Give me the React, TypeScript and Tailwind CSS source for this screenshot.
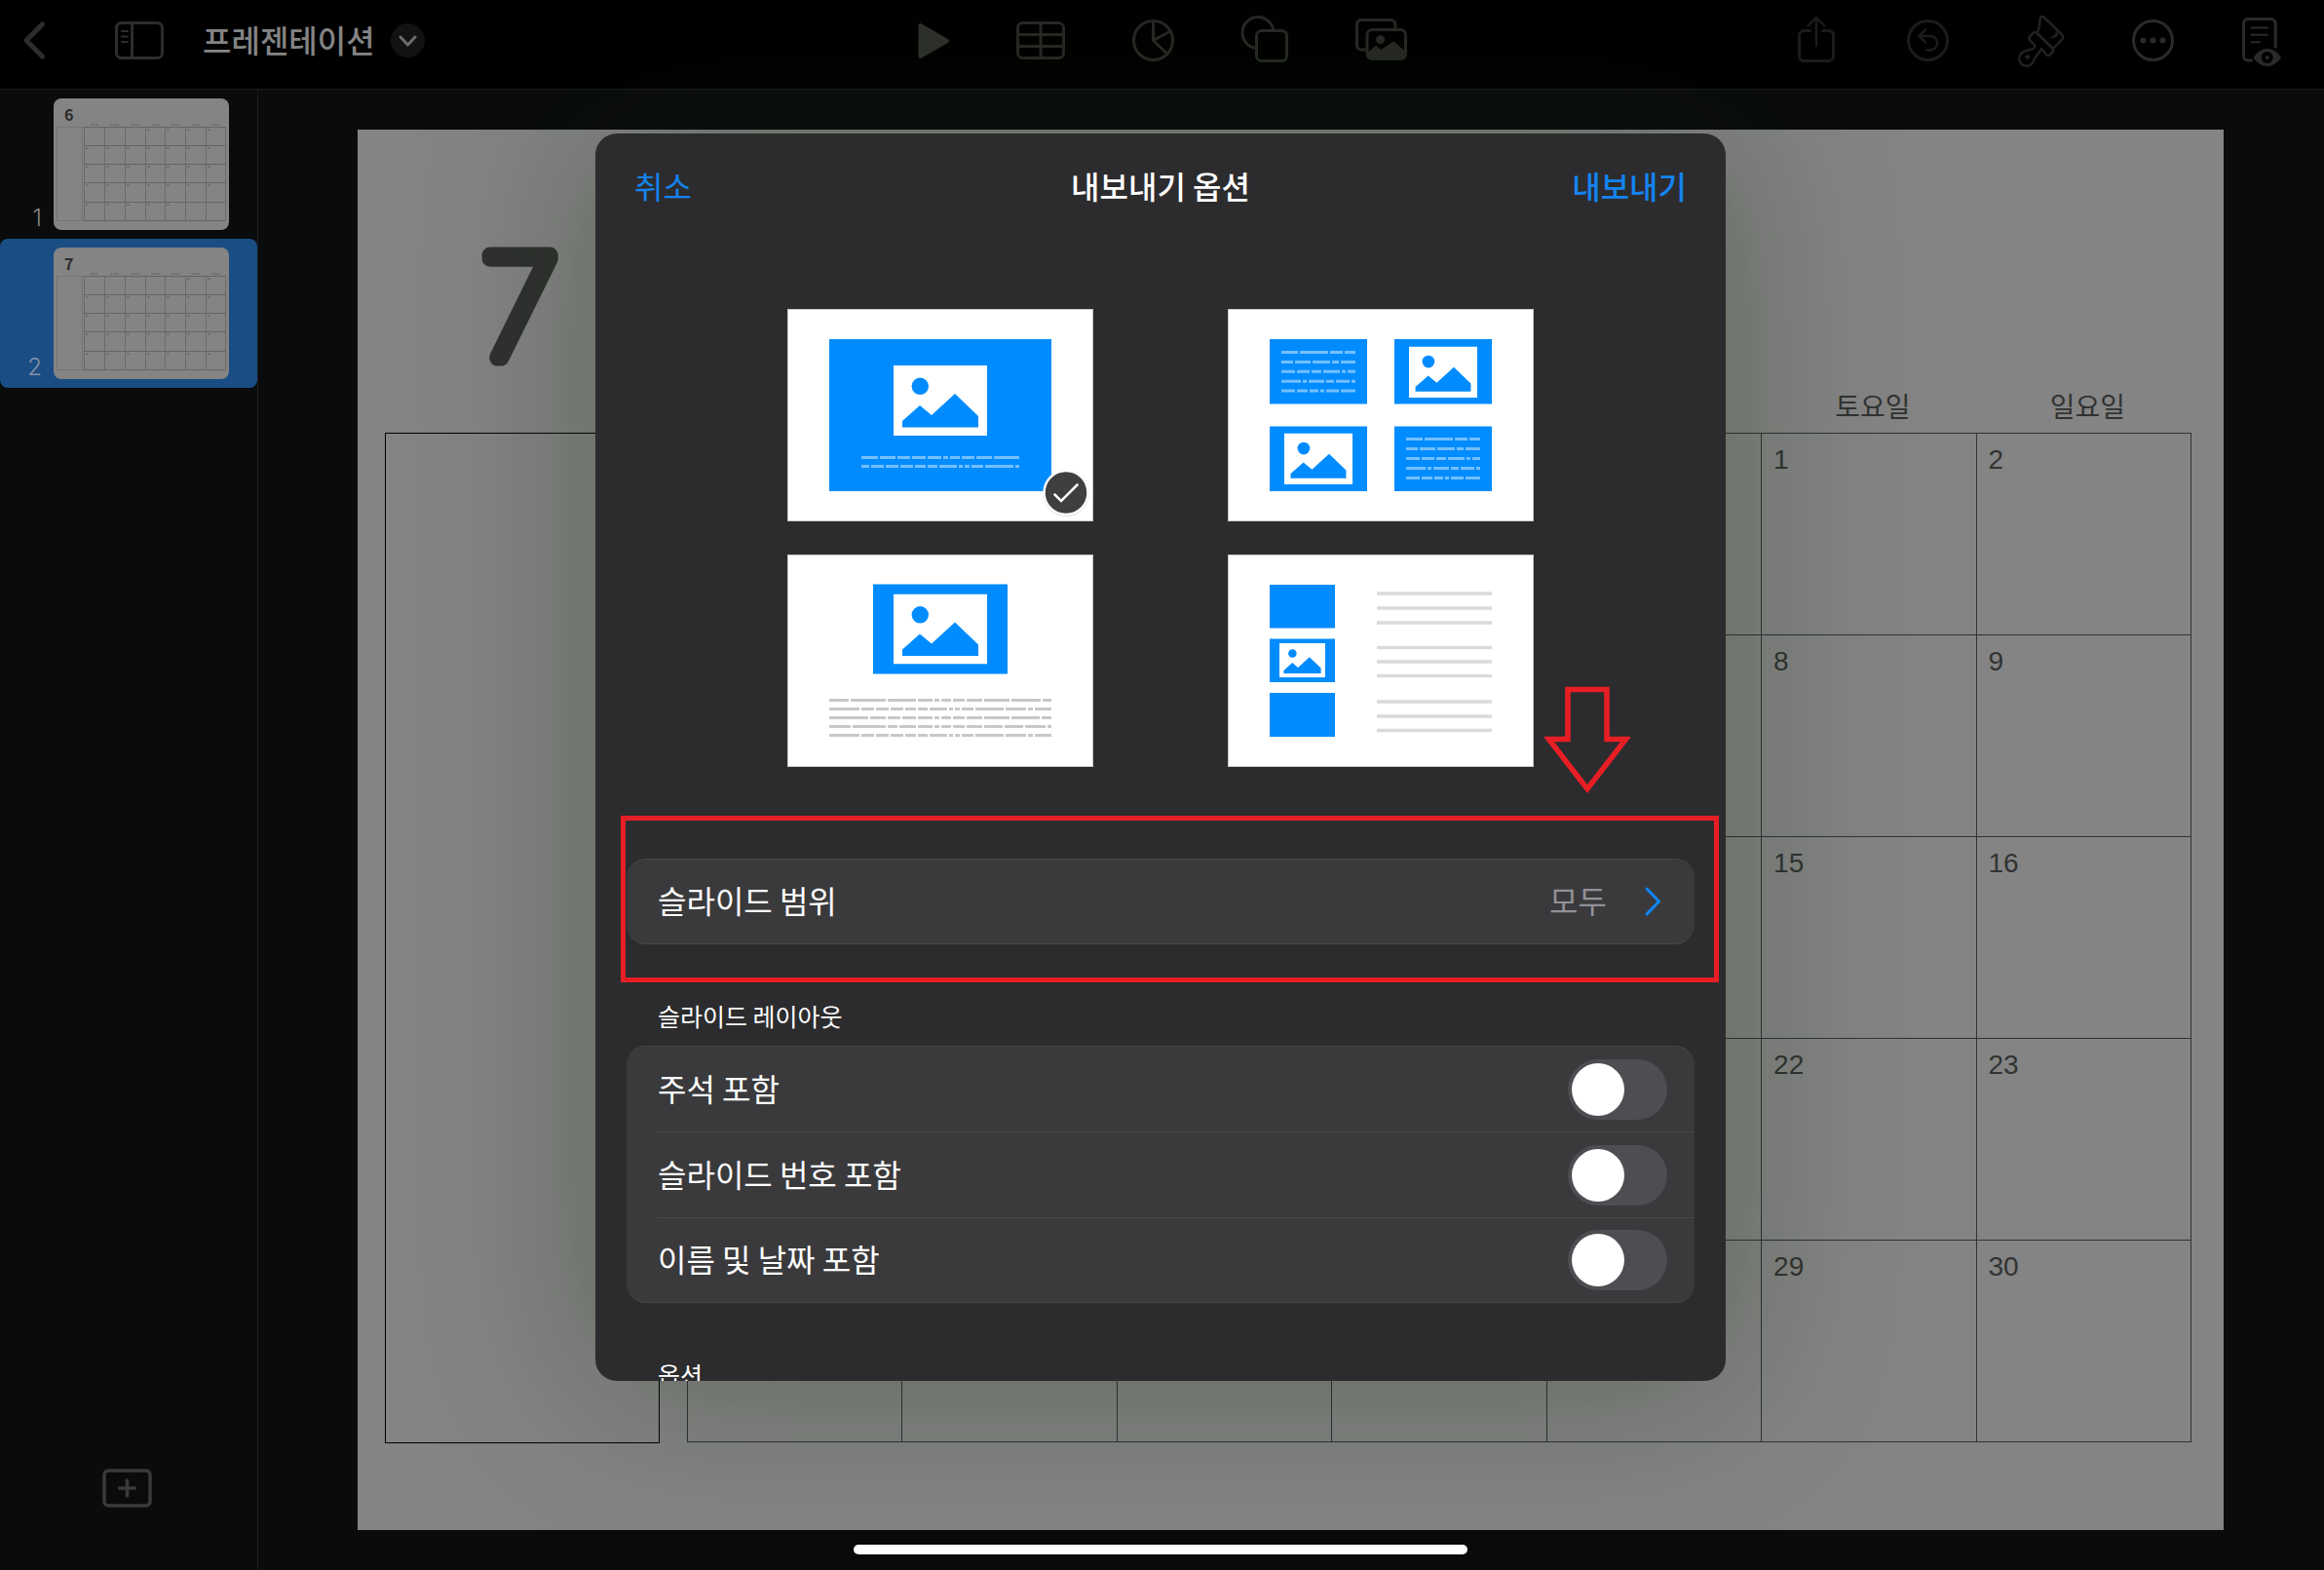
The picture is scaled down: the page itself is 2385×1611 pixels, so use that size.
import { useState } from 'react';
import type { ReactNode } from 'react';

interface IconProps {
  width: number;
  className?: string;
  children: ReactNode;
}

/** Toolbar icons share one height so they line up on the bar */
function Icon({ width, className = '', children }: IconProps) {
  return (
    <svg
      width={width}
      height={51}
      viewBox={`0 0 ${width} 51`}
      fill="none"
      stroke="currentColor"
      strokeWidth={3}
      strokeLinecap="round"
      strokeLinejoin="round"
      overflow="visible"
      className={`shrink-0 ${className}`}
      aria-hidden="true"
    >
      {children}
    </svg>
  );
}

function Toolbar() {
  return (
    <header className="grid h-[92px] shrink-0 grid-cols-[1fr_auto_1fr] items-center border-b border-[#1c1c1e] bg-black px-6 pb-2">
      <div className="flex items-center text-[#2d2d2e]">
        <button aria-label="뒤로">
          <Icon width={22}>
            <path strokeWidth={5} d="M19.5 9 3 25.5 19.5 42" />
          </Icon>
        </button>
        <button aria-label="사이드바" className="ml-[72px]">
          <Icon width={50}>
            <rect x="1.5" y="7.5" width="47" height="36" rx="5" />
            <path d="M17.5 8v35" />
            <path strokeWidth={2} d="M7 16h6M7 21.5h6M7 27h6" />
          </Icon>
        </button>
        <h1 className="ml-10 pb-1 text-[32px] leading-10 font-medium whitespace-nowrap text-[#848484]">프레젠테이션</h1>
        <button
          aria-label="문서 메뉴"
          className="ml-4 flex size-[35px] items-center justify-center rounded-full bg-[#121214] text-[#6c6c6e]"
        >
          <svg width="19" height="12" viewBox="0 0 19 12" fill="none" stroke="currentColor" strokeWidth="3" strokeLinecap="round" strokeLinejoin="round" aria-hidden="true">
            <path d="m2 2 7.5 8L17 2" />
          </svg>
        </button>
      </div>

      <nav className="flex items-center gap-[69px] text-[#272825]">
        <button aria-label="재생">
          <Icon width={33} className="text-[#2f302d]">
            <path strokeWidth={4} fill="currentColor" d="M3.5 10 31 26 3.5 42z" />
          </Icon>
        </button>
        <button aria-label="표">
          <Icon width={50}>
            <rect x="1.5" y="7.5" width="47" height="36" rx="5" />
            <path d="M2 19.5h46M2 31.5h46M25 8v35" />
          </Icon>
        </button>
        <button aria-label="차트">
          <Icon width={43}>
            <circle cx="21.5" cy="25.5" r="20" />
            <path d="M36 39.5 21.5 25.5V6M21.5 25.5l16.5-9" />
          </Icon>
        </button>
        <button aria-label="도형">
          <Icon width={48}>
            <path d="M32.6 14A16 16 0 1 0 14 33.2" />
            <rect x="15.5" y="15.5" width="31" height="31" rx="5" />
          </Icon>
        </button>
        <button aria-label="미디어">
          <Icon width={53}>
            <path d="M41 13V9a4.5 4.5 0 0 0-4.5-4.5H6A4.5 4.5 0 0 0 1.5 9v21.5A4.5 4.5 0 0 0 6 35h4.5" />
            <rect x="12" y="14.5" width="39.5" height="30" rx="5" />
            <circle cx="25.6" cy="24.7" r="4.5" fill="currentColor" stroke="none" />
            <path strokeWidth={1} fill="currentColor" d="m13 38 8-7 5 4.500L38 27.500q1-.8 2 0l11.500 10V40a5 5 0 0 1-5 5h-29a5 5 0 0 1-4.500-5z" />
          </Icon>
        </button>
      </nav>

      <div className="flex items-center justify-end gap-[70px] pr-5 text-[#1c1c1d]">
        <button aria-label="공유">
          <Icon width={42}>
            <path d="M12.500 15.500H6A4.500 4.500 0 0 0 1.500 20v22A4.500 4.500 0 0 0 6 46.500h26a4.500 4.500 0 0 0 4.500-4.500V20a4.500 4.500 0 0 0-4.500-4.500h-6.500" />
            <path strokeWidth={2.5} d="M19 31V2M10.500 10.500 19 2l8.500 8.500" />
          </Icon>
        </button>
        <button aria-label="실행 취소">
          <Icon width={43}>
            <circle cx="21.5" cy="25.5" r="20" />
            <path strokeWidth={2.5} d="M19 14.500 12.500 21l6.500 6.500M12.500 21H24a7.200 7.200 0 0 1 0 14.400h-3.500" />
          </Icon>
        </button>
        <button aria-label="포맷" className="text-[#212122]">
          <Icon width={48}>
            <path strokeWidth={2.5} d="M20.500 18C23.500 13 23 8 23.500 4q1-4.500 4.500-2l18.500 18q1.500 2 0 4L37 34" />
            <path strokeWidth={2.5} d="M20.500 18q-2-2-4 0l-3.500 3.500q-1.500 2.500.5 4.500l4.500 4q1 3-3 4.500l-7 2A7.700 7.700 0 1 0 17.500 45L25 34l5 6q2 2 4 0l2.500-2.500q1.500-2 0-4z" />
            <path strokeWidth={2.5} d="M20.500 18 36.500 33.500" />
            <circle cx="10.700" cy="42.300" r="2.400" fill="currentColor" stroke="none" />
            <path fill="currentColor" stroke="none" d="M40.500 14.500q-1 7-8 8.500 6 1.500 10-3.500z" />
          </Icon>
        </button>
        <button aria-label="더 보기" className="text-[#2a2a2b]">
          <Icon width={43}>
            <circle cx="21.5" cy="25.5" r="20" />
            <g fill="currentColor" stroke="none">
              <circle cx="11.500" cy="25.500" r="3" />
              <circle cx="21.500" cy="25.500" r="3" />
              <circle cx="31.500" cy="25.500" r="3" />
            </g>
          </Icon>
        </button>
        <button aria-label="발표자 노트" className="text-[#2a2a2b]">
          <Icon width={40}>
            <path d="M34.200 32V8a4.500 4.500 0 0 0-4.500-4.500H6A4.500 4.500 0 0 0 1.500 8v33.500A4.500 4.500 0 0 0 6 46h3.500" />
            <path strokeWidth={2} d="M9.500 12.500H26M9.500 19.800H26M9.500 27.200H18" />
            <path fill="currentColor" stroke="none" d="M11.500 43c8-12 20.500-12 28.500 0-8 12-20.500 12-28.500 0z" />
            <circle cx="25.700" cy="43" r="6" fill="#000" stroke="none" />
            <circle cx="25.700" cy="43" r="2" fill="currentColor" stroke="none" />
          </Icon>
        </button>
      </div>
    </header>
  );
}

const THUMB_COLS = [31.5, 52.5, 73.5, 94.5, 114.5, 135.5, 156.5, 176.5];
const THUMB_ROWS = [29.5, 48.5, 67.5, 86.5, 106.5, 125.5];

function SlideThumb({ month, first, last }: { month: string; first: number; last: number }) {
  const days: ReactNode[] = [];
  for (let i = first; i <= last; i++) {
    const x = THUMB_COLS[i % 7];
    const y = THUMB_ROWS[Math.floor(i / 7)];
    days.push(<path key={i} d={`M${x + 1.5} ${y + 2.5}h3`} stroke="#6a6a6a" strokeWidth={1.5} />);
  }
  return (
    <svg width="180" height="135" viewBox="0 0 180 135" className="shrink-0 rounded-lg bg-[#848484]" fill="none" aria-hidden="true">
      <text x="11" y="23" fontSize="16" fontWeight="600" fill="#2b2b2b">
        {month}
      </text>
      <rect x="3.5" y="29.500" width="26" height="96" stroke="#757575" />
      {THUMB_COLS.map((x) => (
        <path key={x} d={`M${x} 29V126`} stroke="#6a6a6a" />
      ))}
      {THUMB_ROWS.map((y) => (
        <path key={y} d={`M31 ${y}H177`} stroke="#646464" />
      ))}
      {THUMB_COLS.slice(0, 7).map((x) => (
        <path key={x} d={`M${x + 6} 27h8`} stroke="#6e6e6e" strokeWidth={2} strokeDasharray="2 1" />
      ))}
      {days}
    </svg>
  );
}

function Sidebar() {
  return (
    <aside className="flex w-[265px] shrink-0 flex-col justify-between border-r border-[#1c1c1e] pb-16">
      <ol>
        <li className="flex items-end gap-3 py-[9px]">
          <span className="w-[43px] text-right font-['Inter'] text-2xl leading-6 font-light text-[#828284]">1</span>
          <SlideThumb month="6" first={3} last={32} />
        </li>
        <li className="flex items-end gap-3 rounded-lg bg-[#1a4d84] py-[9px]">
          <span className="w-[43px] text-right font-['Inter'] text-2xl leading-6 font-light text-[#8793a5]">2</span>
          <SlideThumb month="7" first={5} last={34} />
        </li>
      </ol>
      <button aria-label="슬라이드 추가" className="mr-1 self-center text-[#3a3a3b]">
        <svg width="51" height="40" viewBox="0 0 51 40" fill="none" stroke="currentColor" strokeWidth="3.500" strokeLinecap="round" aria-hidden="true">
          <rect x="2" y="2" width="47" height="36" rx="4.500" />
          <path d="M25.500 12v16M17.500 20h16" />
        </svg>
      </button>
    </aside>
  );
}

const WEEKDAYS = ['', '', '', '', '', '토요일', '일요일'];
const WEEKS = [
  ['', '', '', '', '', '1', '2'],
  ['', '', '', '', '', '8', '9'],
  ['', '', '', '', '', '15', '16'],
  ['', '', '', '', '', '22', '23'],
  ['', '', '', '', '', '29', '30'],
];

function CalendarSlide() {
  return (
    <main className="flex flex-1 flex-col justify-center pr-[103px] pl-[102px]">
      <div className="flex aspect-[4/3] flex-col bg-[#848484] pr-[33px] pb-[89px] pl-7">
        <div className="h-[258px] pt-16 pl-20">
          <svg width="160" height="194" viewBox="0 0 160 194" overflow="visible" aria-label="7">
            <text
              x="19"
              y="170"
              fontSize="145"
              fontWeight="100"
              fill="#303130"
              stroke="#303130"
              strokeWidth="17"
              strokeLinejoin="round"
              className="font-['Inter']"
            >
              7
            </text>
          </svg>
        </div>
        <div className="flex flex-1 gap-7">
          <div className="mt-[53px] w-[282px] shrink-0 border border-black" />
          <div className="flex-1">
            <table className="w-full table-fixed border-collapse text-[28px] leading-8 text-[#313332]">
              <thead>
                <tr className="h-[53px]">
                  {WEEKDAYS.map((day, i) => (
                    <th key={i} className="pb-1 pl-2 font-normal">
                      {day}
                    </th>
                  ))}
                </tr>
              </thead>
              <tbody>
                {WEEKS.map((week, w) => (
                  <tr key={w} className="h-[207px]">
                    {week.map((day, d) => (
                      <td key={d} className="border border-[#2e3334] pt-[11px] pl-3 align-top font-['Liberation_Sans']">
                        {day}
                      </td>
                    ))}
                  </tr>
                ))}
              </tbody>
            </table>
          </div>
        </div>
      </div>
    </main>
  );
}

/** Placeholder photo, drawn on a 96x72 base */
function Photo({ x, y, width }: { x: number; y: number; width: number }) {
  return (
    <svg x={x} y={y} width={width} height={width * 0.75} viewBox="0 0 96 72">
      <path fill="#fff" d="M0 0h96v72H0z" />
      <circle cx="27.300" cy="21.300" r="8.700" fill="#008cff" />
      <path fill="#008cff" d="m9 57 18-16 12 10 24-22 24 23v11.500H9z" />
    </svg>
  );
}

interface TextLinesProps {
  x: number;
  y: number;
  step: number;
  width: number;
  color: string;
  dashes: string[];
}

/** Greeked text: each entry of dashes is one line of words */
function TextLines({ x, y, step, width, color, dashes }: TextLinesProps) {
  return (
    <g stroke={color} strokeWidth={3}>
      {dashes.map((d, i) => (
        <path key={i} d={`M${x} ${y + i * step}h${width}`} strokeDasharray={d} />
      ))}
    </g>
  );
}

const CAPTION = ['17 2 16 2 13 2 14 2 14 2 5 2 10 2 13 2 16 2 26 2', '8 2 13 2 13 2 13 2 11 2 10 2 18 2 4 2 5 2 12 2 29 2 5 2'];
const NOTES = [
  '20 2 36 2 29 2 15 2 5 2 10 2 12 2 16 2 26 2 30 2 9 2',
  '31 2 13 2 13 2 13 2 11 2 10 2 18 2 4 2 5 2 12 2 29 2 21 2 5 2 18 2',
  '40 2 16 2 13 2 14 2 15 2 5 2 10 2 12 2 16 2 26 2 29 2 10 2',
  '22 2 34 2 10 2 17 2 15 2 5 2 10 2 12 2 16 2 19 2 19 2 21 2 4 2',
  '31 2 13 2 13 2 13 2 11 2 10 2 18 2 4 2 5 2 12 2 29 2 21 2 5 2 18 2',
];
const BODY = [
  '17 2 29 2 13 2 11 2',
  '12 2 16 2 18 2 7 2 15 2',
  '14 2 13 2 10 2 17 2 4 2 8 2',
  '20 2 4 2 16 2 8 2 14 2 4 2',
  '14 2 11 2 9 2 4 2 13 2 15 2',
];

const LAYOUTS: { id: string; name: string; art: ReactNode }[] = [
  {
    id: 'slide',
    name: '슬라이드',
    art: (
      <>
        <path fill="#008cff" d="M43 31h228v156H43z" />
        <Photo x={109} y={58} width={96} />
        <TextLines x={76} y={152.5} step={9} width={162} color="#73bfff" dashes={CAPTION} />
      </>
    ),
  },
  {
    id: 'grid',
    name: '격자',
    art: (
      <>
        <path fill="#008cff" d="M43 31h100v66.500H43zM171 31h100v66.500H171zM43 120.500h100V187H43zM171 120.500h100V187H171z" />
        <TextLines x={55} y={44.5} step={9.9} width={76} color="#73bfff" dashes={BODY} />
        <Photo x={186} y={38.5} width={70} />
        <Photo x={58} y={127.5} width={70} />
        <TextLines x={183} y={133.5} step={10} width={76} color="#73bfff" dashes={BODY} />
      </>
    ),
  },
  {
    id: 'notes',
    name: '메모 포함',
    art: (
      <>
        <path fill="#008cff" d="M88 30.500h138v92H88z" />
        <Photo x={109} y={40.5} width={96} />
        <TextLines x={43} y={149.5} step={9} width={228} color="#c8c8c8" dashes={NOTES} />
      </>
    ),
  },
  {
    id: 'handout',
    name: '유인물',
    art: (
      <>
        <path fill="#008cff" d="M43 31h67v44.500H43zM43 86.500h67V131H43zM43 142h67v45H43z" />
        <Photo x={53} y={91} width={47} />
        <path
          stroke="#dadada"
          strokeWidth={3.5}
          d="M153 40h118M153 55h118M153 70h118M153 95.500h118M153 110h118M153 124.500h118M153 151h118M153 166h118M153 180.500h118"
        />
      </>
    ),
  },
];

function LayoutPicker() {
  const [selected, setSelected] = useState('slide');
  return (
    <div className="grid grid-cols-[314px_314px] justify-center gap-x-[138px] gap-y-[34px] pt-[70px]">
      {LAYOUTS.map(({ id, name, art }) => (
        <button
          key={id}
          aria-label={name}
          aria-pressed={selected === id}
          onClick={() => setSelected(id)}
          className="h-[218px] bg-white outline -outline-offset-1 outline-[#c8c8ca]"
        >
          <svg width="314" height="218" viewBox="0 0 314 218" className="block" aria-hidden="true">
            {art}
            {selected === id && (
              <g>
                <circle cx="286" cy="189" r="24" fill="#000" opacity="0.15" />
                <circle cx="286" cy="188.500" r="22.500" fill="#3f3f40" stroke="#fff" strokeWidth="2.500" />
                <path d="m274.500 190.500 6.500 6.500 16.500-16.500" fill="none" stroke="#fff" strokeWidth="2.500" strokeLinecap="round" />
              </g>
            )}
          </svg>
        </button>
      ))}
    </div>
  );
}

const LAYOUT_OPTIONS = [
  { id: 'annotations', label: '주석 포함' },
  { id: 'slide-numbers', label: '슬라이드 번호 포함' },
  { id: 'name-date', label: '이름 및 날짜 포함' },
];

function ExportDialog() {
  return (
    <section
      role="dialog"
      aria-label="내보내기 옵션"
      className="relative h-full w-[1160px] overflow-hidden rounded-[22px] bg-[#2c2c2e] px-8 text-[32px] leading-10 text-white shadow-[0_0_180px_10px_rgba(12,42,4,0.3)]"
    >
      <div className="flex h-[110px] items-center justify-between px-2 pb-1">
        <button className="flex-1 text-left text-[#1484f0]">취소</button>
        <h2 className="font-medium">내보내기 옵션</h2>
        <button className="flex-1 text-right font-medium text-[#1484f0]">내보내기</button>
      </div>

      <LayoutPicker />

      <button className="mt-[94px] flex h-[88px] w-full items-center rounded-[20px] border-y border-[#474749] bg-[#3a3a3c] pr-[35px] pl-8">
        <span className="flex-1 pb-1 text-left">슬라이드 범위</span>
        <span className="pb-1 text-[#919197]">모두</span>
        <svg width="16" height="30" viewBox="0 0 16 30" fill="none" stroke="#0f86f8" strokeWidth="3" strokeLinecap="round" strokeLinejoin="round" className="ml-[39px]" aria-hidden="true">
          <path d="m2 2 12.500 13L2 28" />
        </svg>
      </button>

      <h3 className="mt-[55px] pl-8 text-[25px] leading-9">슬라이드 레이아웃</h3>
      <div className="mt-[13px] rounded-[20px] border-y border-[#474749] bg-[#3a3a3c] pl-8">
        {LAYOUT_OPTIONS.map(({ id, label }) => (
          <div key={id} className="flex h-[88px] items-center justify-between border-b border-[#464648] pr-7 last:h-[86px] last:border-b-0">
            <label htmlFor={id} className="pb-1">
              {label}
            </label>
            <input
              id={id}
              type="checkbox"
              className="h-[62px] w-[102px] appearance-none rounded-full bg-[#4d4d52] p-1 before:block before:size-[54px] before:rounded-full before:bg-white checked:bg-[#30d158] checked:before:ml-10"
            />
          </div>
        ))}
      </div>
      <h3 className="mt-[55px] pl-8 text-[25px] leading-9">옵션</h3>

      {/* callout marks over the slide range row */}
      <div className="absolute top-[700px] right-[7px] left-[26px] h-[171px] border-[5px] border-[#e81e25]" />
      <svg width="88" height="110" viewBox="0 0 88 110" fill="none" stroke="#e81e25" strokeWidth="5.500" className="absolute top-[567px] right-[98px]" aria-hidden="true">
        <path d="M24 3.500h40v51h19.500L44 105.500 4.500 54.500H24z" />
      </svg>
    </section>
  );
}

export default function App() {
  return (
    <div className="relative flex h-screen flex-col overflow-hidden bg-[#0a0b0d] font-['Noto_Sans_CJK_KR',sans-serif]">
      <Toolbar />
      <div className="flex min-h-0 flex-1">
        <Sidebar />
        <CalendarSlide />
      </div>
      <div className="absolute inset-0 flex justify-center pt-[137px] pr-[3px] pb-[194px]">
        <ExportDialog />
      </div>
      <div className="absolute inset-x-0 bottom-4 flex justify-center pr-[3px]">
        <div className="h-[10px] w-[630px] rounded-full bg-white" />
      </div>
    </div>
  );
}
